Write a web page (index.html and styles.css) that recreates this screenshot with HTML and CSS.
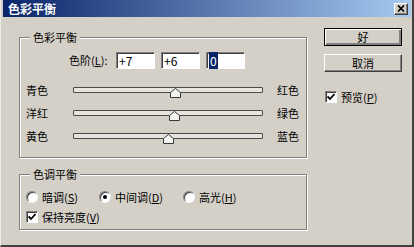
FILE: index.html
```html
<!DOCTYPE html>
<html lang="zh-CN">
<head>
    <meta charset="UTF-8">
    <title>色彩平衡</title>
    <link rel="stylesheet" href="styles.css">
</head>
<body>
    <div class="window">
        <div class="titlebar">
            <span class="title">色彩平衡</span>
            <span class="close">
                <svg width="8" height="7" viewBox="0 0 8 7">
                    <path d="M1 0.5 L7 6.5 M7 0.5 L1 6.5" stroke="#000" stroke-width="1.7" fill="none"/>
                </svg>
            </span>
        </div>
        <div class="body">
            <div class="main">
                <div class="group balance">
                    <div class="group-title">色彩平衡</div>
                    <div class="levels">
                        <span class="levels-label">色阶(<u>L</u>):</span>
                        <span class="field">+7</span>
                        <span class="field">+6</span>
                        <span class="field"><span class="sel">0</span></span>
                    </div>
                    <div class="slider-row">
                        <span class="side-label">青色</span>
                        <div class="track"><span class="thumb" style="left: calc(53.5% - 5px)"><svg width="11" height="10" viewBox="0 0 11 10"><path d="M5.5 0.5 L10.5 4.5 V9.5 H0.5 V4.5 Z" fill="#f4f4f2" stroke="#3a3a3a"/></svg></span></div>
                        <span class="side-label right">红色</span>
                    </div>
                    <div class="slider-row">
                        <span class="side-label">洋红</span>
                        <div class="track"><span class="thumb" style="left: calc(53% - 5px)"><svg width="11" height="10" viewBox="0 0 11 10"><path d="M5.5 0.5 L10.5 4.5 V9.5 H0.5 V4.5 Z" fill="#f4f4f2" stroke="#3a3a3a"/></svg></span></div>
                        <span class="side-label right">绿色</span>
                    </div>
                    <div class="slider-row">
                        <span class="side-label">黄色</span>
                        <div class="track"><span class="thumb" style="left: calc(50% - 5px)"><svg width="11" height="10" viewBox="0 0 11 10"><path d="M5.5 0.5 L10.5 4.5 V9.5 H0.5 V4.5 Z" fill="#f4f4f2" stroke="#3a3a3a"/></svg></span></div>
                        <span class="side-label right">蓝色</span>
                    </div>
                </div>

                <div class="group tone">
                    <div class="group-title">色调平衡</div>
                    <div class="radio-row">
                        <label class="option first"><span class="radio"></span>暗调(<u>S</u>)</label>
                        <label class="option second"><span class="radio checked"></span>中间调(<u>D</u>)</label>
                        <label class="option"><span class="radio"></span>高光(<u>H</u>)</label>
                    </div>
                    <label class="option keep"><span class="checkbox"><svg width="8" height="8" viewBox="0 0 8 8"><path d="M0.5 3.5 L3 6 L7.5 1" stroke="#000" stroke-width="1.8" fill="none"/></svg></span>保持亮度(<u>V</u>)</label>
                </div>
            </div>

            <div class="actions">
                <button class="btn default">好</button>
                <button class="btn">取消</button>
                <label class="option preview"><span class="checkbox"><svg width="8" height="8" viewBox="0 0 8 8"><path d="M0.5 3.5 L3 6 L7.5 1" stroke="#000" stroke-width="1.8" fill="none"/></svg></span>预览(<u>P</u>)</label>
            </div>
        </div>
    </div>
</body>
</html>
```

FILE: styles.css
```css
body {
    margin: 0;
    background: #d4d0c8;
    font-family: "Noto Sans CJK SC", "Noto Sans", sans-serif;
    font-size: 11px;
    color: #000;
}
.window {
    width: 414px;
    height: 247px;
    box-sizing: border-box;
    background: #d4d0c8;
    border-left: 1px solid #ecebe6;
    border-right: 2px solid #404040;
    border-bottom: 2px solid #404040;
    padding: 0 1px 0 2px;
    overflow: hidden;
}
.titlebar {
    height: 17px;
    display: flex;
    align-items: center;
    padding: 0 3px 0 5px;
    background: linear-gradient(to right, #0a246a, #a6caf0);
}
.title {
    color: #fff;
    font-weight: bold;
    font-size: 12px;
    line-height: 17px;
}
.close {
    margin-left: auto;
    width: 14px;
    height: 12px;
    box-sizing: border-box;
    display: flex;
    align-items: center;
    justify-content: center;
    background: #d4d0c8;
    border: 1px solid;
    border-color: #fff #404040 #404040 #fff;
    box-shadow: inset -1px -1px #808080;
}
.body {
    display: flex;
}
.main {
    width: 288px;
    margin-left: 16px;
}
.group {
    border: 1px solid #808080;
    box-shadow: inset 1px 1px #fff, 1px 1px #fff;
}
.group-title {
    display: table;
    margin: -8px 0 0 10px;
    padding: 0 3px;
    background: #d4d0c8;
    line-height: 14px;
}
.balance {
    margin-top: 20px;
    padding-bottom: 10px;
}
.levels {
    display: flex;
    align-items: center;
    margin: 8px 0 0 49px;
}
.levels-label {
    width: 47px;
    line-height: 17px;
}
.field {
    width: 39px;
    height: 17px;
    box-sizing: border-box;
    margin-right: 6px;
    padding-left: 2px;
    background: #fff;
    border: 1px solid;
    border-color: #808080 #fff #fff #808080;
    box-shadow: inset 1px 1px #404040;
    line-height: 15px;
    font-size: 12px;
}
.sel {
    background: #0a246a;
    color: #fff;
    padding: 0 1px;
}
.slider-row {
    display: flex;
    align-items: center;
    height: 23px;
    padding-left: 6px;
}
.levels + .slider-row {
    margin-top: 9px;
}
.side-label {
    width: 47px;
}
.side-label.right {
    width: auto;
    margin-left: 14px;
}
.track {
    position: relative;
    width: 190px;
    height: 6px;
    box-sizing: border-box;
    border: 1px solid #4a4a4a;
    border-radius: 1px;
    background: #e6e4de;
}
.thumb {
    position: absolute;
    top: 0;
    width: 11px;
    height: 10px;
    display: block;
}
.thumb svg {
    display: block;
}
.tone {
    margin-top: 16px;
    padding-bottom: 4px;
}
.radio-row {
    display: flex;
    align-items: center;
    height: 16px;
    margin-top: 8px;
    padding-left: 6px;
}
.option {
    display: flex;
    align-items: center;
    line-height: 16px;
}
.option.first {
    width: 73px;
}
.option.second {
    width: 84px;
}
.keep {
    margin-top: 4px;
    padding-left: 6px;
}
.radio {
    width: 12px;
    height: 12px;
    box-sizing: border-box;
    margin-right: 4px;
    border-radius: 50%;
    border: 1px solid;
    border-color: #808080 #f4f4f4 #f4f4f4 #808080;
    background: #fff;
    box-shadow: inset 1px 1px #404040;
    display: flex;
    align-items: center;
    justify-content: center;
}
.radio.checked::after {
    content: "";
    width: 4px;
    height: 4px;
    border-radius: 50%;
    background: #000;
}
.checkbox {
    width: 12px;
    height: 12px;
    box-sizing: border-box;
    margin-right: 4px;
    background: #fff;
    border: 1px solid;
    border-color: #808080 #fff #fff #808080;
    box-shadow: inset 1px 1px #404040;
    display: flex;
    align-items: center;
    justify-content: center;
}
.checkbox svg {
    display: block;
}
.actions {
    margin-left: 17px;
    padding-top: 11px;
    display: flex;
    flex-direction: column;
}
.btn {
    width: 78px;
    height: 18px;
    box-sizing: border-box;
    padding: 0;
    font-family: inherit;
    font-size: 11px;
    background: #d4d0c8;
    border: 1px solid;
    border-color: #fff #404040 #404040 #fff;
    box-shadow: inset -1px -1px #808080;
    margin-bottom: 8px;
}
.btn.default {
    border: 1px solid #000;
    box-shadow: inset 1px 1px #fff, inset -2px -2px #808080;
}
.preview {
    margin-top: 9px;
    padding-left: 1px;
}
```
